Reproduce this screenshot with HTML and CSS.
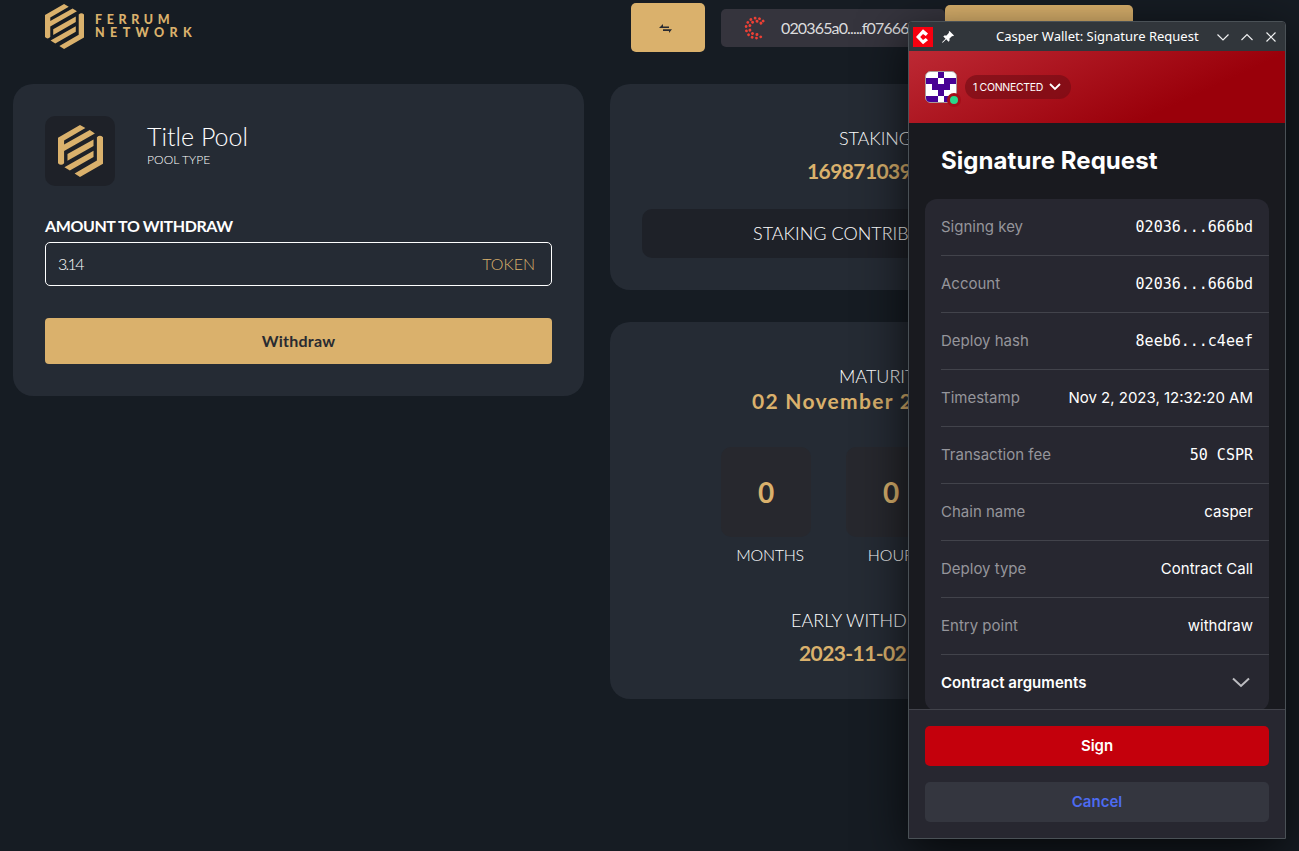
FILE: index.html
```html
<!DOCTYPE html>
<html lang="en">
<head>
<meta charset="utf-8">
<title>Ferrum Network</title>
<link rel="stylesheet" href="styles.css">
</head>
<body>
<svg width="0" height="0" class="defs"><defs>
<symbol id="ferrum" viewBox="0 0 133 154" preserveAspectRatio="none"><path d="M0 38L65 0L81 9L18 46V58L94 15L109 25L18 77V113Q9 123 0 113ZM28 86L105 43V62L28 106ZM19 125L105 76V95L35 135ZM115 36Q124 28 133 36V115L65 154L49 144L115 105Z"/></symbol>
</defs></svg>
<div class="page">
  <header class="top">
    <div class="brand"><svg class="brand-icon"><use href="#ferrum"/></svg><div class="wordmark"><span class="w1">FERRUM</span><span class="w2">NETWORK</span></div></div>
    <div class="swap"><svg width="14" height="10" viewBox="0 0 14 10"><path d="M4 0V2.400H10V4H0ZM4 5.300H13L10 9V7H4Z" fill="#292b31"/></svg></div>
    <div class="address">
      <svg width="24" height="24" viewBox="0 0 24 24"><g fill="none" stroke="#ee4035" stroke-linecap="round"><path d="M19.200 5.100A10 10 0 1 0 19.200 19" stroke-width="2.700" stroke-dasharray=".1 4.300"/><path d="M17 7.200A6.700 6.700 0 1 0 16.500 17" stroke-width="2.900" stroke-dasharray=".1 4.300"/></g></svg>
      <span>020365a0.....f07666bd</span>
    </div>
    <div class="connect"></div>
  </header>
  <main class="columns">
    <section class="card pool">
      <div class="pool-head"><div class="pool-logo"><svg class="pool-icon"><use href="#ferrum"/></svg></div><div><div class="title">Title Pool</div><div class="type">POOL TYPE</div></div></div>
      <div class="label">AMOUNT TO WITHDRAW</div>
      <div class="field"><span class="amount">3.14</span><span class="token">TOKEN</span></div>
      <div class="withdraw">Withdraw</div>
    </section>
    <div class="stats">
      <section class="card staking">
        <div class="cap s1">STAKING</div>
        <div class="gold g1">169871039</div>
        <div class="contrib">STAKING CONTRIB</div>
      </section>
      <section class="card maturity">
        <div class="cap m1">MATURITY</div>
        <div class="gold g2">02 November 2023</div>
        <div class="timers">
          <div class="timer"><div class="box">0</div><span class="t1">MONTHS</span></div>
          <div class="timer"><div class="box">0</div><span class="t2">HOURS</span></div>
        </div>
        <div class="cap e1">EARLY WITHD</div>
        <div class="gold g3">2023-11-02</div>
      </section>
    </div>
  </main>
</div>
<aside class="wallet">
  <div class="bar">
    <svg class="app" viewBox="0 0 20 20"><path fill="#f8000f" d="M0 0H20V20H0Z"/><path d="M15 6.500L10 2.200L3 10L10 17.300L15 13.300L12.800 11L10 13L7.200 10L10 7L12.800 9Z" fill="#fff"/></svg>
    <svg class="pin" viewBox="0 0 12 12"><path d="M7.500 0L12 4.500L11 5.300L10.200 5L7.500 7.500V9.700L6.500 10.700L4.200 8.300L.7 11.800L0 11.200L3.500 7.700L1.300 5.400L2.300 4.500H4.500L7 1.800L6.700.8Z" fill="#fff"/></svg>
    <span class="caption">Casper Wallet: Signature Request</span>
    <svg class="controls" width="60" height="12" viewBox="0 0 60 12" fill="none" stroke="#eff0f1" stroke-width="1.150"><path d="M.5 3.500L6 9L11.500 3.500M24.500 9L30 3.500L35.500 9M49.500 1.500L58.500 10.500M58.500 1.500L49.500 10.500"/></svg>
  </div>
  <div class="banner">
    <div class="avatar"><svg width="32" height="32" viewBox="0 0 32 32"><rect x=".5" y=".5" width="31" height="31" rx="5" fill="#fff" stroke="#a99"/><path fill="#480295" d="M13 1H19V7H13ZM1 7H13V13H19V7H31V13H25V19H19V25H13V19H7V13H1ZM1 25H13V31H5Q1 31 1 27ZM19 25H31V27Q31 31 27 31H19Z"/></svg><i class="online"></i></div>
    <div class="pill"><span>1 CONNECTED</span><svg width="12" height="8" viewBox="0 0 12 8"><path d="M1 1L6 6L11 1" fill="none" stroke="#fff" stroke-width="1.800"/></svg></div>
  </div>
  <div class="content">
    <h1>Signature Request</h1>
    <div class="rows">
      <div class="row"><span>Signing key</span><b class="mono">02036...666bd</b></div>
      <div class="row"><span>Account</span><b class="mono">02036...666bd</b></div>
      <div class="row"><span>Deploy hash</span><b class="mono">8eeb6...c4eef</b></div>
      <div class="row"><span>Timestamp</span><b>Nov 2, 2023, 12:32:20 AM</b></div>
      <div class="row"><span>Transaction fee</span><b class="mono">50 CSPR</b></div>
      <div class="row"><span>Chain name</span><b>casper</b></div>
      <div class="row"><span>Deploy type</span><b>Contract Call</b></div>
      <div class="row"><span>Entry point</span><b>withdraw</b></div>
      <div class="row args"><span>Contract arguments</span><svg width="18" height="11" viewBox="0 0 18 11"><path d="M1 1.500L9 9L17 1.500" fill="none" stroke="#bcbcc0" stroke-width="2"/></svg></div>
    </div>
  </div>
  <footer class="actions"><div class="sign">Sign</div><div class="cancel">Cancel</div></footer>
</aside>
</body>
</html>
```
FILE: styles.css
```css
* { box-sizing: border-box; }
body { margin: 0; width: 1299px; height: 851px; overflow: hidden; background: #161c23; color: #fff; font-family: Lato, "Liberation Sans", sans-serif; white-space: nowrap; position: relative; }
.defs { position: absolute; }
svg { display: block; flex: none; }
.top { display: flex; height: 84px; padding: 3px 0 0 45px; align-items: flex-start; }
.brand { display: flex; width: 586px; gap: 11px; }
.brand-icon { width: 39px; height: 45px; margin-top: 1px; fill: #dab16c; }
.wordmark { display: flex; flex-direction: column; padding-top: 10px; color: #dab16c; font: 900 12.500px/13px Lato, sans-serif; }
.w1 { letter-spacing: 4.600px; }
.w2 { letter-spacing: 5.400px; }
.swap { width: 74px; height: 49px; border-radius: 5px; background: #dab16c; display: flex; align-items: center; justify-content: center; padding: 2px 5px 0 0; }
.address { margin: 6px 0 0 16px; width: 224px; height: 38px; border-radius: 5px; background: #35343d; display: flex; align-items: center; padding-left: 23px; gap: 13px; font-size: 16px; font-weight: 400; letter-spacing: -.850px; color: #dcdcde; }
.address span { position: relative; top: -1px; }
.connect { margin-top: 2px; width: 188px; height: 49px; border-radius: 5px; background: #dab16c; }
.columns { display: flex; gap: 26px; padding-left: 13px; align-items: flex-start; }
.card { width: 571px; border-radius: 20px; background: #252b34; overflow: hidden; }
.pool { height: 312px; padding: 32px; }
.pool-head { display: flex; gap: 32px; height: 98px; }
.pool-logo { width: 70px; height: 70px; border-radius: 10px; background: #1e2128; display: flex; align-items: center; justify-content: center; }
.pool-icon { width: 45px; height: 52px; fill: #dab16c; }
.title { font-size: 25px; font-weight: 300; line-height: 30px; margin: 5px 0 1px; }
.type { font-size: 12px; font-weight: 300; line-height: 16px; letter-spacing: .1px; }
.label { font-size: 16px; font-weight: 700; line-height: 24px; margin-bottom: 4px; letter-spacing: -.400px; }
.field { width: 507px; height: 44px; border: 1px solid #fff; border-radius: 5px; display: flex; justify-content: space-between; align-items: center; padding: 0 16px 2px 12px; font-size: 16px; font-weight: 300; }
.amount { letter-spacing: -1.700px; }
.token { color: #dab16c; }
.withdraw { margin-top: 32px; width: 507px; height: 46px; line-height: 46px; text-align: center; border-radius: 4px; background: #dab16c; color: #292b31; font-size: 16px; font-weight: 700; letter-spacing: .250px; }
.stats { display: flex; flex-direction: column; gap: 32px; }
.staking { height: 206px; padding: 41px 32px 32px; }
.cap { font-size: 18px; font-weight: 300; line-height: 27px; }
.gold { color: #dab16c; font-size: 21px; font-weight: 700; line-height: 32px; }
.s1, .m1 { padding-left: 197px; }
.s1 { letter-spacing: -.100px; }
.g1 { padding-left: 165px; margin-top: 3px; letter-spacing: -.600px; }
.contrib { height: 49px; margin-top: 22px; padding-left: 111px; line-height: 49px; border-radius: 10px; background: #1e2128; font-size: 18px; font-weight: 300; }
.maturity { height: 377px; padding: 41px 32px; }
.g2 { padding-left: 110px; margin-top: -5px; letter-spacing: 1.300px; }
.timers { display: flex; gap: 35px; margin: 30px 0 0 79px; }
.timer { width: 90px; height: 134px; text-align: center; font-weight: 300; font-size: 16px; }
.timer span { display: block; margin-top: 6px; line-height: 24px; }
.box { height: 90px; line-height: 90px; border-radius: 10px; background: #27282e; color: #dab16c; font-size: 28px; font-weight: 700; }
.timer .t1 { padding-left: 8px; letter-spacing: -.300px; }
.timer .t2 { padding-left: 8px; }
.e1 { padding-left: 149px; margin-top: 26px; }
.g3 { padding-left: 157px; margin-top: 3px; letter-spacing: -.600px; }
.wallet { position: absolute; left: 908px; top: 21px; width: 378px; height: 818px; border: 1px solid #4a5156; border-radius: 4px 4px 0 0; overflow: hidden; background: #191a1f; box-shadow: 0 14px 50px rgba(0,0,0,.72); display: flex; flex-direction: column; font-family: Inter, sans-serif; }
.bar { height: 29px; flex: none; background: #31363b; display: flex; align-items: center; padding-left: 4px; font: 13px "Noto Sans", sans-serif; }
.app { width: 20px; height: 20px; }
.pin { width: 12px; height: 12px; margin-left: 9px; }
.caption { width: 203px; margin-left: 42px; padding-bottom: 1px; }
.controls { margin-left: 18px; }
.banner { height: 72px; flex: none; background: linear-gradient(155deg, #bd2934 0%, #9a000a 72%); display: flex; align-items: center; gap: 8px; padding-left: 16px; }
.avatar { position: relative; }
.online { position: absolute; left: 22px; top: 22px; width: 14px; height: 14px; border: 3px solid #a50e19; border-radius: 50%; background: #29d98b; }
.pill { display: flex; align-items: center; justify-content: space-between; width: 106px; height: 24px; border-radius: 12px; padding: 0 10px 0 8px; background: rgba(112,12,20,.6); font-size: 10.500px; letter-spacing: -.300px; }
.content { flex: 1; min-height: 0; overflow: hidden; padding: 20px 16px 0; }
h1 { margin: 0 0 20px 16px; font-size: 24px; line-height: 36px; font-weight: 700; letter-spacing: .06px; }
.rows { height: 512px; border-radius: 12px; background: #272730; padding-left: 16px; }
.row { height: 57px; border-bottom: 1px solid #42434b; padding: 0 16px 2px 0; display: flex; align-items: center; justify-content: space-between; font-size: 15px; }
.row span { color: #95959b; }
.row b { font-weight: 400; }
.row .mono { font: 15px "DejaVu Sans Mono", monospace; padding-top: 1px; }
.row.args { border: 0; padding-right: 19px; }
.row.args span { color: #fff; font-weight: 600; letter-spacing: .05px; }
.actions { height: 129px; flex: none; border-top: 1px solid #42434b; background: #272730; padding: 16px; }
.sign, .cancel { height: 40px; line-height: 40px; border-radius: 5px; text-align: center; background: #c4000c; font-size: 15px; font-weight: 600; }
.cancel { margin-top: 16px; background: #34363f; color: #4d6bf0; }
```
